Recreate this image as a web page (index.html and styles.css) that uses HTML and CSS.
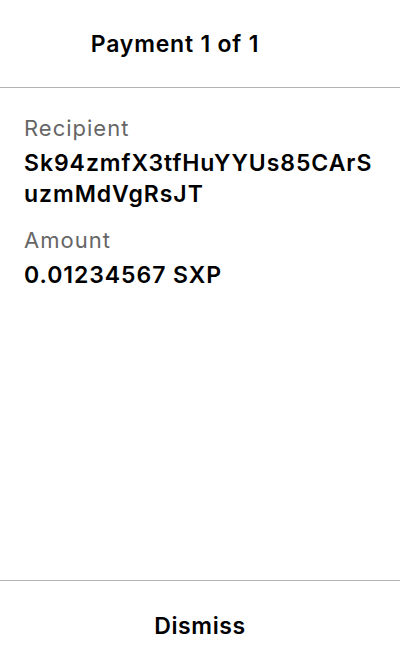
FILE: index.html
```html
<!DOCTYPE html>
<html>
<head>
<meta charset="utf-8">
<link rel="stylesheet" href="styles.css">
</head>
<body>
<div class="screen">
  <header class="header">
    <h1 class="title">Payment 1 of 1</h1>
  </header>
  <main class="content">
    <div class="label">Recipient</div>
    <div class="value">Sk94zmfX3tfHuYYUs85CArSuzmMdVgRsJT</div>
    <div class="label">Amount</div>
    <div class="value">0.01234567 SXP</div>
  </main>
  <footer class="footer">
    <button class="dismiss">Dismiss</button>
  </footer>
</div>
</body>
</html>
```
FILE: styles.css
```css
* { box-sizing: border-box; }
html, body { margin: 0; padding: 0; background: #fff; }
body { font-family: Inter, "Noto Sans", sans-serif; color: #000; }
.screen { width: 400px; height: 672px; display: flex; flex-direction: column; }
.header { height: 88px; border-bottom: 1px solid #b3b3b3; display: flex; align-items: center; justify-content: center; padding-right: 50px; }
.title { margin: 0; font-size: 23px; font-weight: 600; letter-spacing: 0.8px; }
.content { flex: 1; padding: 26px 24px 0; }
.label { font-size: 22px; color: #666; line-height: 28px; margin-bottom: 6px; letter-spacing: 1px; }
.value { font-size: 23px; font-weight: 600; line-height: 31px; word-break: break-all; margin-bottom: 16px; letter-spacing: 0.95px; }
.footer { height: 92px; border-top: 1px solid #b3b3b3; display: flex; align-items: center; justify-content: center; padding-bottom: 2px; }
.dismiss { border: 0; background: none; font-family: inherit; font-size: 23px; font-weight: 600; color: #000; padding: 0; letter-spacing: 0.6px; }
```
